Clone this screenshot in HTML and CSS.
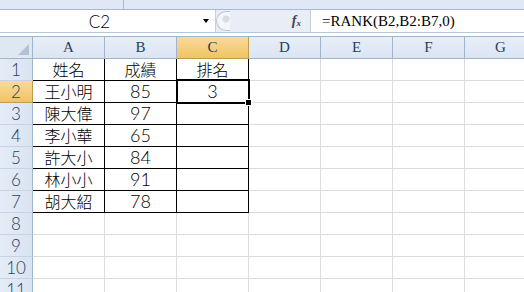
FILE: index.html
```html
<!DOCTYPE html>
<html lang="zh-Hant">
<head>
<meta charset="UTF-8">
<meta name="viewport" content="width=device-width, initial-scale=1.0">
<title>RANK</title>
<link rel="stylesheet" href="styles.css">
</head>
<body>
<div class="ribbon"><span class="ribbon-split"></span></div>
<div class="formula-bar">
    <div class="name-box">
        <span class="ref">C2</span>
        <span class="drop"></span>
    </div>
    <div class="splitter"><span class="knob"></span></div>
    <div class="fx-area"><span class="fx">f<sub>x</sub></span></div>
    <div class="formula">=RANK(B2,B2:B7,0)</div>
</div>
<div class="gap"></div>
<div class="sheet">
    <div class="corner"><span class="tri"></span></div>
    <div class="colh">A</div>
    <div class="colh">B</div>
    <div class="colh active">C</div>
    <div class="colh">D</div>
    <div class="colh">E</div>
    <div class="colh">F</div>
    <div class="colh">G</div>

    <div class="rowh">1</div>
    <div class="cell t">姓名</div><div class="cell t">成績</div><div class="cell t">排名</div>
    <div class="cell"></div><div class="cell"></div><div class="cell"></div><div class="cell"></div>

    <div class="rowh active">2</div>
    <div class="cell t">王小明</div><div class="cell t num">85</div><div class="cell t num sel">3<span class="handle"></span></div>
    <div class="cell"></div><div class="cell"></div><div class="cell"></div><div class="cell"></div>

    <div class="rowh">3</div>
    <div class="cell t">陳大偉</div><div class="cell t num">97</div><div class="cell t"></div>
    <div class="cell"></div><div class="cell"></div><div class="cell"></div><div class="cell"></div>

    <div class="rowh">4</div>
    <div class="cell t">李小華</div><div class="cell t num">65</div><div class="cell t"></div>
    <div class="cell"></div><div class="cell"></div><div class="cell"></div><div class="cell"></div>

    <div class="rowh">5</div>
    <div class="cell t">許大小</div><div class="cell t num">84</div><div class="cell t"></div>
    <div class="cell"></div><div class="cell"></div><div class="cell"></div><div class="cell"></div>

    <div class="rowh">6</div>
    <div class="cell t">林小小</div><div class="cell t num">91</div><div class="cell t"></div>
    <div class="cell"></div><div class="cell"></div><div class="cell"></div><div class="cell"></div>

    <div class="rowh">7</div>
    <div class="cell t">胡大紹</div><div class="cell t num">78</div><div class="cell t"></div>
    <div class="cell"></div><div class="cell"></div><div class="cell"></div><div class="cell"></div>

    <div class="rowh">8</div>
    <div class="cell"></div><div class="cell"></div><div class="cell"></div>
    <div class="cell"></div><div class="cell"></div><div class="cell"></div><div class="cell"></div>

    <div class="rowh">9</div>
    <div class="cell"></div><div class="cell"></div><div class="cell"></div>
    <div class="cell"></div><div class="cell"></div><div class="cell"></div><div class="cell"></div>

    <div class="rowh">10</div>
    <div class="cell"></div><div class="cell"></div><div class="cell"></div>
    <div class="cell"></div><div class="cell"></div><div class="cell"></div><div class="cell"></div>

    <div class="rowh">11</div>
    <div class="cell"></div><div class="cell"></div><div class="cell"></div>
    <div class="cell"></div><div class="cell"></div><div class="cell"></div><div class="cell"></div>
</div>
</body>
</html>
```

FILE: styles.css
```css
body {
    margin: 0;
    padding: 0;
    width: 524px;
    height: 292px;
    overflow: hidden;
    background-color: #fff;
    font-family: "Liberation Sans", "Noto Sans CJK TC", sans-serif;
}

/* ribbon bottom strip */
.ribbon {
    height: 9px;
    background-color: #dfe8f4;
    border-bottom: 1px solid #a7bad3;
    position: relative;
}
.ribbon-split {
    position: absolute;
    left: 123px;
    top: 0;
    width: 1px;
    height: 9px;
    background-color: #a7bad3;
}

/* name box + formula bar */
.formula-bar {
    display: flex;
    height: 22px;
    border-bottom: 1px solid #b6c6da;
    background-color: #e9eef6;
}
.name-box {
    width: 215px;
    background-color: #fff;
    border-right: 1px solid #c3cfdf;
    display: flex;
    align-items: center;
}
.ref {
    width: 199px;
    text-align: center;
    font-family: "Lato", "Liberation Sans", sans-serif;
    font-weight: 300;
    font-size: 17px;
    color: #000;
}
.drop {
    width: 0;
    height: 0;
    border-left: 3px solid transparent;
    border-right: 3px solid transparent;
    border-top: 4px solid #000;
    margin-left: 4px;
}
.splitter {
    width: 15px;
    display: flex;
    align-items: center;
}
.knob {
    display: block;
    width: 14px;
    height: 20px;
    border-radius: 10px 0 0 10px;
    border: 1px solid #b9c6d6;
    border-right: none;
    background: radial-gradient(circle at 9px 7px, #d6dde6 0 3px, transparent 4px), #f4f6f9;
    box-sizing: border-box;
}
.fx-area {
    width: 79px;
    display: flex;
    align-items: center;
    justify-content: flex-end;
    padding-right: 9px;
    box-sizing: border-box;
}
.fx {
    font-family: "Liberation Serif", serif;
    font-style: italic;
    font-weight: bold;
    font-size: 14px;
    color: #3b4654;
}
.fx sub {
    font-size: 9px;
    vertical-align: -1px;
}
.formula {
    flex: 1;
    background-color: #fff;
    border-left: 1px solid #c3cfdf;
    padding-left: 11px;
    font-family: "Liberation Serif", serif;
    font-size: 15px;
    line-height: 22px;
    color: #000;
}
.gap {
    height: 3px;
    background-color: #fff;
}

/* worksheet grid */
.sheet {
    display: grid;
    grid-template-columns: 33px repeat(7, 72px);
    grid-auto-rows: 22px;
    border-top: 1px solid #9eb6ce;
}
.sheet > div {
    box-sizing: border-box;
}
.corner {
    background-color: #dfe7f2;
    border-right: 1px solid #9eb6ce;
    border-bottom: 1px solid #9eb6ce;
    position: relative;
}
.tri {
    position: absolute;
    right: 3px;
    bottom: 3px;
    width: 0;
    height: 0;
    border-left: 11px solid transparent;
    border-bottom: 11px solid #b4c2d3;
}
.colh {
    background: linear-gradient(#e7eef8, #dbe5f2);
    border-right: 1px solid #9eb6ce;
    border-bottom: 1px solid #9eb6ce;
    font-family: "Liberation Serif", serif;
    font-size: 15px;
    line-height: 21px;
    text-align: center;
    color: #27415f;
}
.rowh {
    background: linear-gradient(90deg, #e4ecf7, #dae4f1);
    border-right: 1px solid #9eb6ce;
    border-bottom: 1px solid #c5d3e5;
    font-family: "Lato", "Liberation Sans", sans-serif;
    font-weight: 300;
    font-size: 17px;
    line-height: 21px;
    text-align: center;
    color: #27415f;
}
.colh.active,
.rowh.active {
    background: linear-gradient(#f9da9f, #f1c462);
    border-color: #c29b4a;
}
.cell {
    border-right: 1px solid #dadcdd;
    border-bottom: 1px solid #dadcdd;
    font-family: "Noto Sans CJK TC", sans-serif;
    font-weight: 300;
    font-size: 16px;
    line-height: 21px;
    text-align: center;
    color: #000;
}
.cell.t {
    border-right-color: #000;
    border-bottom-color: #000;
}
.cell.num {
    font-family: "Lato", "Liberation Sans", sans-serif;
    font-weight: 300;
    font-size: 18px;
}
.sel {
    position: relative;
}
.sel::after {
    content: "";
    position: absolute;
    top: -2px;
    left: -1px;
    right: -2px;
    bottom: -2px;
    border: 2px solid #000;
}
.handle {
    position: absolute;
    right: -4px;
    bottom: -4px;
    width: 5px;
    height: 5px;
    background-color: #000;
    border: 1px solid #fff;
    z-index: 1;
}
```
